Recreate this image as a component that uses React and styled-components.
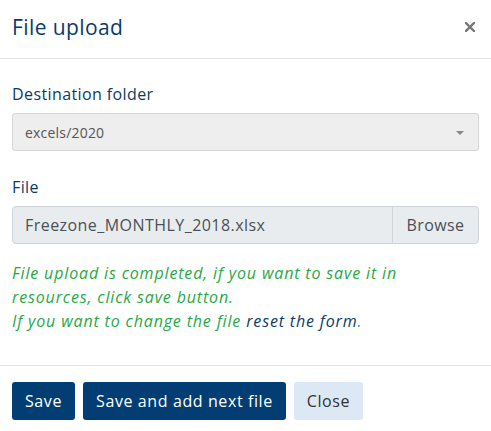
import React from "react";
import styled, { createGlobalStyle } from "styled-components";

const Global = createGlobalStyle`
  html, body { margin: 0; padding: 0; background: #fff; }
  body { font-family: "Open Sans", "Noto Sans", sans-serif; }
  * { box-sizing: border-box; }
`;

const Modal = styled.div`
  width: 491px;
  background: #fff;
  display: flex;
  flex-direction: column;
`;

const Header = styled.div`
  height: 59px;
  padding: 0 14px 4px 12px;
  display: flex;
  align-items: center;
  justify-content: space-between;
  border-bottom: 1px solid #e5e5e5;
`;

const Title = styled.h4`
  margin: 0;
  font-size: 21px;
  font-weight: 400;
  color: #0b3a68;
  letter-spacing: 0.4px;
`;

const CloseX = styled.button`
  border: 0;
  background: none;
  padding: 0;
  width: 14px;
  height: 14px;
  display: flex;
  align-items: center;
  justify-content: center;
  cursor: pointer;
`;

const Body = styled.div`
  padding: 24px 12px 32px 12px;
  display: flex;
  flex-direction: column;
`;

const Group = styled.div`
  display: flex;
  flex-direction: column;
  margin-bottom: ${(p) => p.$mb || 0}px;
`;

const Label = styled.label`
  font-size: 16px;
  color: #0b3a68;
  line-height: 22px;
  margin-bottom: 8px;
  letter-spacing: 0.4px;
`;

const Select = styled.div`
  height: 38px;
  border: 1px solid #d5d5d5;
  border-radius: 3px;
  background: #eeeeee;
  display: flex;
  align-items: center;
  justify-content: space-between;
  padding: 0 14px 0 12px;
  font-size: 14px;
  color: #555;
  letter-spacing: 0.2px;
`;

const Caret = styled.span`
  width: 0;
  height: 0;
  border-left: 4px solid transparent;
  border-right: 4px solid transparent;
  border-top: 4px solid #888;
  margin-top: 2px;
`;

const FileGroup = styled.div`
  height: 38px;
  display: flex;
  border: 1px solid #ced4da;
  border-radius: 4px;
  background: #e9ecef;
  overflow: hidden;
`;

const FileName = styled.div`
  flex: 1;
  display: flex;
  align-items: center;
  padding: 0 12px;
  font-size: 16px;
  color: #495057;
  letter-spacing: 0.45px;
`;

const Browse = styled.div`
  width: 86px;
  display: flex;
  align-items: center;
  justify-content: center;
  border-left: 1px solid #ced4da;
  font-size: 16px;
  color: #495057;
  letter-spacing: 0.4px;
`;

const Note = styled.p`
  margin: 17px 0 0;
  font-style: italic;
  font-size: 16px;
  line-height: 24px;
  color: #28a745;
  letter-spacing: 0.85px;
`;

const Link = styled.a`
  color: #0b3a68;
  text-decoration: none;
`;

const Footer = styled.div`
  border-top: 1px solid #e5e5e5;
  padding: 16px 12px;
  display: flex;
  gap: 8px;
`;

const Button = styled.button`
  height: 38px;
  padding: 0 13px;
  border: 0;
  border-radius: 3px;
  font-family: inherit;
  font-size: 16px;
  letter-spacing: 0.6px;
  background: ${(p) => (p.$secondary ? "#dce8f3" : "#023e73")};
  color: ${(p) => (p.$secondary ? "#333" : "#fff")};
  cursor: pointer;
`;

export default function App() {
  return (
    <>
      <Global />
      <Modal>
        <Header>
          <Title>File upload</Title>
          <CloseX aria-label="Close">
            <svg width="10" height="10" viewBox="0 0 10 10">
              <path d="M1 1 L9 9 M9 1 L1 9" stroke="#777" strokeWidth="2.4" strokeLinecap="square" />
            </svg>
          </CloseX>
        </Header>
        <Body>
          <Group $mb={25}>
            <Label>Destination folder</Label>
            <Select>
              <span>excels/2020</span>
              <Caret />
            </Select>
          </Group>
          <Group>
            <Label>File</Label>
            <FileGroup>
              <FileName>Freezone_MONTHLY_2018.xlsx</FileName>
              <Browse>Browse</Browse>
            </FileGroup>
          </Group>
          <Note>
            File upload is completed, if you want to save it in
            <br />
            resources, click save button.
            <br />
            If you want to change the file <Link href="#">reset the form</Link>.
          </Note>
        </Body>
        <Footer>
          <Button>Save</Button>
          <Button>Save and add next file</Button>
          <Button $secondary>Close</Button>
        </Footer>
      </Modal>
    </>
  );
}
